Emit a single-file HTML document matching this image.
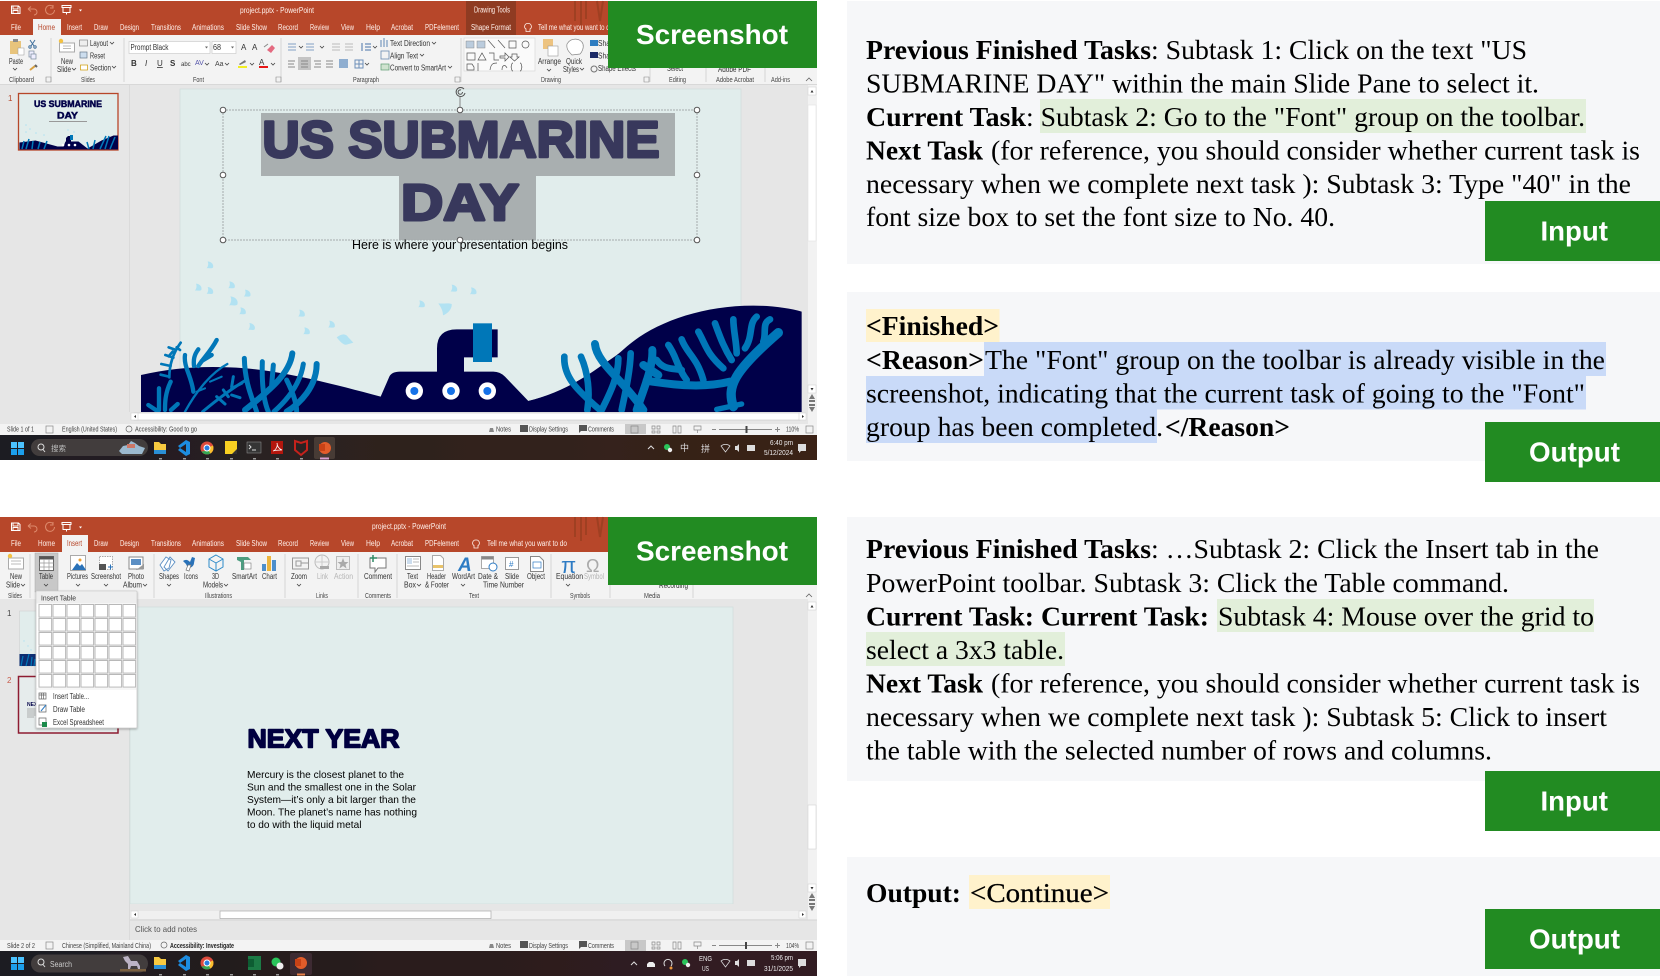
<!DOCTYPE html>
<html lang="en"><head><meta charset="utf-8"><title>Screenshot task examples</title>
<style>
html,body{margin:0;padding:0;background:#fff}
svg{display:block}
text{font-family:"Liberation Sans","Noto Sans CJK SC",sans-serif}
.s{font-family:"Liberation Serif",serif;font-size:27px;fill:#000}
.b{font-family:"Liberation Serif",serif;font-size:27px;font-weight:700;fill:#000}
.w{font-weight:700;fill:#fff}
.t{font-size:8px;fill:#fff0ea}
.r{font-size:8px;fill:#333}
.g{font-size:7px;fill:#444}
.st{font-size:7px;fill:#444}
.tk{font-size:7.5px;fill:#eee}
</style></head><body>
<svg xmlns="http://www.w3.org/2000/svg" width="1660" height="980" viewBox="0 0 1660 980">
<defs>
<filter id="bl" x="-2%" y="-2%" width="104%" height="104%"><feGaussianBlur stdDeviation="0.3"/></filter>
<filter id="bt" x="-2%" y="-2%" width="104%" height="104%"><feGaussianBlur stdDeviation="0.15"/></filter>
<filter id="sh" x="-10%" y="-10%" width="120%" height="120%"><feDropShadow dx="0" dy="1" stdDeviation="1" flood-opacity=".3"/></filter>
<path id="f" d="M-7-11C6-10 12 0 9 8 4 12-3 8-10 10-5 3-4-4-7-11z" fill="#b2e2f2"/>
<path id="c" d="M0 0l2 2 2-2" fill="none" stroke="#444" stroke-width=".8"/>
<pattern id="cell" x="38.5" y="604" width="14" height="14" patternUnits="userSpaceOnUse"><rect x=".5" y=".5" width="12.6" height="12.6" fill="#fff" stroke="#b8b8b8"/></pattern>
<g id="qat" fill="none" stroke="#fff" stroke-width="1">
<path d="M11.500 6h7l1.500 1.500v6h-8.500zM13 6v3h5V6M13 13.500v-3h5v3"/>
<path d="M28 9h6a3 3 0 0 1 0 6M28 9l3-2.500M28 9l3 2.500" stroke="#dd8a6c"/>
<path d="M53 6.500a4.500 4.500 0 1 0 1.500 3.500M53 5v3h-3" stroke="#dd8a6c"/>
<path d="M62 5.500h9v2h-9zM63 7.500v5h7v-5M66.500 12.500v2"/>
<path d="M79 9.500l1.500 2 1.500-2z" fill="#fff" stroke="none"/>
</g>
<g id="win"><rect x="0" y="0" width="6" height="6" fill="#4cc2ff"/><rect x="7" y="0" width="6" height="6" fill="#4cc2ff"/><rect x="0" y="7" width="6" height="6" fill="#1f9fec"/><rect x="7" y="7" width="6" height="6" fill="#1f9fec"/></g>
<g id="folder"><path d="M-6-6h5l2 2h5v10h-12z" fill="#f7c93f"/><rect x="-6" y="2" width="12" height="4" fill="#2a8fd6"/></g>
<g id="vs"><path d="M2-8L6-6v12L2 8-6 2l2-2 6 4V-4l-6 4-2-2z" fill="#1f8ce0"/></g>
<g id="chr"><circle r="6.500" fill="#dd4b3e"/><path d="M-5.500 3.500A6.500 6.500 0 0 0 4 5L1 0-1 3z" fill="#34a853"/><path d="M6 -2.500A6.500 6.500 0 0 1 3.500 5.500L0 0z" fill="#fbc02d"/><circle r="3" fill="#2a7de1" stroke="#fff"/></g>
</defs>

<!-- ======= right panels ======= -->
<g filter="url(#bt)">
<rect x="847" y="1" width="813" height="263" fill="#f6f7f9"/>
<rect x="847" y="292" width="813" height="169" fill="#f6f7f9"/>
<rect x="847" y="517" width="813" height="264" fill="#f6f7f9"/>
<rect x="847" y="857" width="813" height="119" fill="#f6f7f9"/>

<rect x="1040" y="99" width="546" height="34" fill="#e2efda"/>
<text class="b" x="866" y="59" textLength="285" lengthAdjust="spacingAndGlyphs">Previous Finished Tasks</text>
<text class="s" x="1151" y="59" textLength="376" lengthAdjust="spacingAndGlyphs">: Subtask 1: Click on the text "US</text>
<text class="s" x="866" y="92.500" textLength="673" lengthAdjust="spacingAndGlyphs">SUBMARINE DAY" within the main Slide Pane to select it.</text>
<text class="b" x="866" y="126" textLength="160" lengthAdjust="spacingAndGlyphs">Current Task</text>
<text class="s" x="1026" y="126" textLength="559" lengthAdjust="spacingAndGlyphs">: Subtask 2: Go to the "Font" group on the toolbar.</text>
<text class="b" x="866" y="159.500" textLength="117" lengthAdjust="spacingAndGlyphs">Next Task</text>
<text class="s" x="991" y="159.500" textLength="649" lengthAdjust="spacingAndGlyphs">(for reference, you should consider whether current task is</text>
<text class="s" x="866" y="193" textLength="765" lengthAdjust="spacingAndGlyphs">necessary when we complete next task ): Subtask 3: Type "40" in the</text>
<text class="s" x="866" y="226" textLength="469" lengthAdjust="spacingAndGlyphs">font size box to set the font size to No. 40.</text>

<rect x="866" y="309" width="133.500" height="33" fill="#fff2cc"/>
<rect x="984" y="342" width="622" height="34" fill="#c9daf8"/>
<rect x="866" y="376" width="720" height="33.500" fill="#c9daf8"/>
<rect x="866" y="409.500" width="291" height="33.500" fill="#c9daf8"/>
<text class="b" x="866" y="335" textLength="133" lengthAdjust="spacingAndGlyphs">&lt;Finished&gt;</text>
<text class="b" x="866" y="369" textLength="118" lengthAdjust="spacingAndGlyphs">&lt;Reason&gt;</text>
<text class="s" x="985" y="369" textLength="620" lengthAdjust="spacingAndGlyphs">The "Font" group on the toolbar is already visible in the</text>
<text class="s" x="866" y="402.500" textLength="719" lengthAdjust="spacingAndGlyphs">screenshot, indicating that the current task of going to the "Font"</text>
<text class="s" x="866" y="436" textLength="297" lengthAdjust="spacingAndGlyphs">group has been completed.</text>
<text class="b" x="1165" y="436" textLength="125" lengthAdjust="spacingAndGlyphs">&lt;/Reason&gt;</text>

<rect x="1217" y="599" width="377" height="33" fill="#e2efda"/>
<rect x="866" y="632" width="199" height="34" fill="#e2efda"/>
<text class="b" x="866" y="558" textLength="285" lengthAdjust="spacingAndGlyphs">Previous Finished Tasks</text>
<text class="s" x="1151" y="558" textLength="448" lengthAdjust="spacingAndGlyphs">: …Subtask 2: Click the Insert tab in the</text>
<text class="s" x="866" y="592" textLength="643" lengthAdjust="spacingAndGlyphs">PowerPoint toolbar. Subtask 3: Click the Table command.</text>
<text class="b" x="866" y="625.500" textLength="343" lengthAdjust="spacingAndGlyphs">Current Task: Current Task:</text>
<text class="s" x="1218" y="625.500" textLength="376" lengthAdjust="spacingAndGlyphs">Subtask 4: Mouse over the grid to</text>
<text class="s" x="866" y="659" textLength="198" lengthAdjust="spacingAndGlyphs">select a 3x3 table.</text>
<text class="b" x="866" y="692.500" textLength="117" lengthAdjust="spacingAndGlyphs">Next Task</text>
<text class="s" x="991" y="692.500" textLength="649" lengthAdjust="spacingAndGlyphs">(for reference, you should consider whether current task is</text>
<text class="s" x="866" y="726" textLength="741" lengthAdjust="spacingAndGlyphs">necessary when we complete next task ): Subtask 5: Click to insert</text>
<text class="s" x="866" y="759.500" textLength="626" lengthAdjust="spacingAndGlyphs">the table with the selected number of rows and columns.</text>

<rect x="969" y="875" width="141" height="34" fill="#fff2cc"/>
<text class="b" x="866" y="902" textLength="95" lengthAdjust="spacingAndGlyphs">Output:</text>
<text class="s" x="970" y="902" textLength="139" stroke="#000" stroke-width=".25" lengthAdjust="spacingAndGlyphs">&lt;Continue&gt;</text>

<rect x="1485" y="201" width="175" height="60" fill="#228b22"/>
<text class="w" x="1540.500" y="240.500" font-size="28" textLength="67.500" lengthAdjust="spacingAndGlyphs">Input</text>
<rect x="1485" y="422" width="175" height="60" fill="#228b22"/>
<text class="w" x="1529" y="461.500" font-size="28" textLength="91" lengthAdjust="spacingAndGlyphs">Output</text>
<rect x="1485" y="771" width="175" height="60" fill="#228b22"/>
<text class="w" x="1540.500" y="810.500" font-size="28" textLength="67.500" lengthAdjust="spacingAndGlyphs">Input</text>
<rect x="1485" y="909" width="175" height="60" fill="#228b22"/>
<text class="w" x="1529" y="948.500" font-size="28" textLength="91" lengthAdjust="spacingAndGlyphs">Output</text>
</g>

<!-- ======= screenshot 1 ======= -->
<g filter="url(#bl)">
<rect x="0" y="84" width="817" height="340" fill="#e6e6e6"/>
<rect x="0" y="1" width="817" height="34" fill="#b7472a"/>
<rect x="466" y="1" width="50" height="34" fill="#8f3a20"/>
<rect x="33" y="19" width="28" height="17" fill="#f3f3f3"/>
<rect x="0" y="35" width="817" height="49" fill="#f3f3f3"/>
<use href="#qat"/>
<path d="M575 1v20M581 1v24M586 1v18M597 1l3 20 3-20" stroke="#8f3a20" stroke-width="2" opacity=".6" fill="none"/>
<text class="t" x="240" y="13" textLength="74" lengthAdjust="spacingAndGlyphs">project.pptx  -  PowerPoint</text>
<text class="t" x="474" y="12.500" textLength="36" font-size="7" lengthAdjust="spacingAndGlyphs">Drawing Tools</text>
<text class="t" x="11" y="30" textLength="10" lengthAdjust="spacingAndGlyphs">File</text>
<text x="38" y="30" font-size="8" fill="#b7472a" textLength="17" lengthAdjust="spacingAndGlyphs">Home</text>
<text class="t" x="67" y="30" textLength="15" lengthAdjust="spacingAndGlyphs">Insert</text>
<text class="t" x="94" y="30" textLength="14" lengthAdjust="spacingAndGlyphs">Draw</text>
<text class="t" x="120" y="30" textLength="19" lengthAdjust="spacingAndGlyphs">Design</text>
<text class="t" x="151" y="30" textLength="30" lengthAdjust="spacingAndGlyphs">Transitions</text>
<text class="t" x="192" y="30" textLength="32" lengthAdjust="spacingAndGlyphs">Animations</text>
<text class="t" x="236" y="30" textLength="31" lengthAdjust="spacingAndGlyphs">Slide Show</text>
<text class="t" x="278" y="30" textLength="20" lengthAdjust="spacingAndGlyphs">Record</text>
<text class="t" x="310" y="30" textLength="19" lengthAdjust="spacingAndGlyphs">Review</text>
<text class="t" x="341" y="30" textLength="13" lengthAdjust="spacingAndGlyphs">View</text>
<text class="t" x="366" y="30" textLength="14" lengthAdjust="spacingAndGlyphs">Help</text>
<text class="t" x="391" y="30" textLength="22" lengthAdjust="spacingAndGlyphs">Acrobat</text>
<text class="t" x="425" y="30" textLength="34" lengthAdjust="spacingAndGlyphs">PDFelement</text>
<text class="t" x="471" y="30" textLength="40" lengthAdjust="spacingAndGlyphs">Shape Format</text>
<path d="M528 23.500a3 3 0 0 1 2 5.500v2.500h-4v-2.500a3 3 0 0 1 2-5.500z" fill="none" stroke="#fff0ea" stroke-width=".8"/>
<text class="t" x="538" y="30" textLength="75" lengthAdjust="spacingAndGlyphs">Tell me what you want to do</text>

<!-- ribbon 1 separators -->
<path d="M51 38v44M124 38v44M281 38v44M461 38v44M650 38v44M706 38v44M765 38v44" stroke="#cfcfcf" stroke-width=".8"/>
<!-- clipboard -->
<rect x="10" y="41" width="11" height="13" fill="#e8c47c"/><rect x="13" y="39" width="5" height="3" fill="#8c8c8c"/><rect x="18" y="48" width="6" height="7" fill="#fff" stroke="#999" stroke-width=".5"/>
<path d="M30 40l4 6M35 40l-4 6" stroke="#3f6f9c" fill="none"/><circle cx="30" cy="47" r="1.200" fill="none" stroke="#3f6f9c"/><circle cx="35" cy="47" r="1.200" fill="none" stroke="#3f6f9c"/>
<rect x="29" y="51" width="5" height="6" fill="#eef" stroke="#789" stroke-width=".7"/><rect x="31" y="54" width="5" height="5" fill="#eef" stroke="#789" stroke-width=".7"/>
<path d="M30 70l5-4" stroke="#d8a040" stroke-width="2"/><path d="M35 65l2 2" stroke="#666" stroke-width="2"/>
<text class="r" x="9" y="64" textLength="14" lengthAdjust="spacingAndGlyphs">Paste</text><use href="#c" x="13" y="68"/>
<text class="g" x="9" y="82" textLength="25" lengthAdjust="spacingAndGlyphs">Clipboard</text>
<!-- slides -->
<rect x="59.500" y="43" width="15" height="9" fill="#fff" stroke="#aaa"/><path d="M63 46h8M63 48.500h8" stroke="#bbb"/><circle cx="61" cy="41" r="2.200" fill="#f4c242"/>
<text class="r" x="61" y="64" textLength="12" lengthAdjust="spacingAndGlyphs">New</text><text class="r" x="57" y="72" textLength="14" lengthAdjust="spacingAndGlyphs">Slide</text><use href="#c" x="72" y="68"/>
<rect x="79.500" y="40" width="8" height="6" fill="#eee" stroke="#888" stroke-width=".7"/><text class="r" x="90" y="46" textLength="18" lengthAdjust="spacingAndGlyphs">Layout</text><use href="#c" x="110" y="42"/>
<rect x="80" y="52" width="7" height="6" fill="#cde" stroke="#678" stroke-width=".7"/><text class="r" x="90" y="58.500" textLength="15" lengthAdjust="spacingAndGlyphs">Reset</text>
<rect x="80.500" y="65" width="7" height="5" fill="#fff" stroke="#c90" stroke-width=".7"/><text class="r" x="90" y="70.500" textLength="21" lengthAdjust="spacingAndGlyphs">Section</text><use href="#c" x="112" y="66"/>
<text class="g" x="81" y="82" textLength="14" lengthAdjust="spacingAndGlyphs">Slides</text>
<!-- font -->
<rect x="129" y="41.500" width="81" height="12" fill="#fff" stroke="#ccc" stroke-width=".7"/><text class="r" x="130.500" y="50" textLength="38" lengthAdjust="spacingAndGlyphs">Prompt Black</text>
<path d="M205 46.500l1.500 2 1.500-2z" fill="#666"/>
<rect x="212" y="41.500" width="24" height="12" fill="#fff" stroke="#ccc" stroke-width=".7"/><text class="r" x="213" y="50" textLength="8" lengthAdjust="spacingAndGlyphs">68</text>
<path d="M231 46.500l1.500 2 1.500-2z" fill="#666"/>
<text class="r" x="241" y="50" font-size="8">A</text><text class="r" x="252" y="50" font-size="7">A</text>
<path d="M267 50l5-5 3 3-4 5z" fill="#e46a80"/><path d="M264 47l4-3" stroke="#888"/>
<text x="131" y="66" font-size="8" font-weight="700" fill="#333">B</text>
<text x="145" y="66" font-size="8" font-style="italic" font-family="Liberation Serif" fill="#333">I</text>
<text x="157" y="66" font-size="8" fill="#333" text-decoration="underline">U</text>
<text x="170" y="66" font-size="8" font-weight="700" fill="#333">S</text>
<text x="181" y="66" font-size="6" fill="#333">abc</text>
<text x="195" y="65" font-size="7" fill="#55a">AV</text><use href="#c" x="205" y="63"/>
<text x="215" y="66" font-size="7" fill="#444">Aa</text><use href="#c" x="225" y="63"/>
<path d="M239 64l6-4 1 2-6 3z" fill="#777"/><rect x="238" y="66" width="9" height="2" fill="#f2ee22"/><use href="#c" x="250" y="63"/>
<text x="259" y="65" font-size="8" fill="#333">A</text><rect x="259" y="66" width="9" height="2" fill="#e61414"/><use href="#c" x="271" y="63"/>
<text class="g" x="193" y="82" textLength="11" lengthAdjust="spacingAndGlyphs">Font</text>
<!-- paragraph -->
<path d="M288 44h8M288 47h8M288 50h8M306 44h8M306 47h8M306 50h8" stroke="#5f87b5" stroke-width=".8"/>
<use href="#c" x="299" y="46"/><use href="#c" x="320" y="46"/>
<path d="M332 44h8M332 47h8M332 50h8M345 44h8M345 47h8M345 50h8" stroke="#bbb"/>
<path d="M362 43v8M365 44h6M365 47h6M365 50h6" stroke="#4a73a8"/><use href="#c" x="373" y="46"/>
<rect x="298" y="57" width="13" height="13" fill="#c4c4c4"/>
<path d="M288 61h7M288 64h6M288 67h7M301 61h7M301 64h7M301 67h7M314 61h7M315 64h6M314 67h7M326 61h7M326 64h7M326 67h7" stroke="#888"/>
<rect x="339" y="59" width="9" height="9" fill="#8faed0"/><path d="M355 60h8v8h-8zM355 64h8M359 60v8" fill="none" stroke="#6d8fb8"/><use href="#c" x="365" y="63"/>
<path d="M381 40v7M384 38v9M387 40v7" stroke="#5f87b5"/><text class="r" x="390" y="46" textLength="40" lengthAdjust="spacingAndGlyphs">Text Direction</text><use href="#c" x="432" y="42"/>
<rect x="381" y="51" width="8" height="8" fill="none" stroke="#6a8ab0" stroke-width=".8"/><text class="r" x="390" y="58.500" textLength="28" lengthAdjust="spacingAndGlyphs">Align Text</text><use href="#c" x="420" y="54"/>
<rect x="381" y="64" width="8" height="6" fill="#cfe3cf" stroke="#5a9a70" stroke-width=".7"/><text class="r" x="390" y="70.500" textLength="56" lengthAdjust="spacingAndGlyphs">Convert to SmartArt</text><use href="#c" x="448" y="66"/>
<text class="g" x="353" y="82" textLength="26" lengthAdjust="spacingAndGlyphs">Paragraph</text>
<!-- drawing -->
<rect x="464" y="38" width="71" height="33" fill="#fafafa" stroke="#d8d8d8" stroke-width=".7"/>
<rect x="466" y="41" width="8" height="7" fill="#bcd" stroke="#888" stroke-width=".5"/><rect x="477" y="41" width="8" height="7" fill="#bcd" stroke="#888" stroke-width=".5"/>
<path d="M488 40l7 8M498 40l7 8M509 41h7v7h-7zM522 44.500a3.500 3.500 0 1 0 7 0a3.500 3.500 0 1 0-7 0M467 53h8v7h-8zM478 60l4-7 4 7zM489 53h5v7h5M500 56h5v-3l4 4-4 4v-3h-5zM512 54h5v3h2l-4.500 4-4.500-4h2zM467 64h5l2 3v3h-7zM478 63v8M490 70c1-7 4-7 7-7M502 70c0-5 3-6 5-2M513 63c-2 0-1 3-2 4 1 1 0 4 2 4M520 63c2 0 1 3 2 4-1 1 0 4-2 4" fill="none" stroke="#555" stroke-width=".7"/>
<rect x="543" y="39" width="10" height="10" fill="#edc380"/><rect x="548" y="46" width="10" height="10" fill="#fff" stroke="#999" stroke-width=".6"/>
<text class="r" x="538" y="64" textLength="23" lengthAdjust="spacingAndGlyphs">Arrange</text><use href="#c" x="547" y="69"/>
<path d="M567 44c4-7 14-6 16 0 1 4-1 8-3 10l-8 1c-3-3-6-6-5-11z" fill="#fff" stroke="#888" stroke-width=".7"/>
<text class="r" x="566" y="64" textLength="16" lengthAdjust="spacingAndGlyphs">Quick</text><text class="r" x="563" y="72" textLength="16" lengthAdjust="spacingAndGlyphs">Styles</text><use href="#c" x="580" y="68"/>
<rect x="590" y="40" width="8" height="6" fill="#2d7cc0"/><rect x="590" y="52" width="8" height="6" fill="#1c2c66"/>
<path d="M594 66a3 3 0 1 0 .1 0" fill="none" stroke="#777"/>
<text class="r" x="598" y="46" textLength="12" lengthAdjust="spacingAndGlyphs">Sha</text><text class="r" x="598" y="58.500" textLength="12" lengthAdjust="spacingAndGlyphs">Sha</text>
<text class="r" x="598" y="71" textLength="38" lengthAdjust="spacingAndGlyphs">Shape Effects</text>
<text class="g" x="541" y="82" textLength="20" lengthAdjust="spacingAndGlyphs">Drawing</text>
<text class="r" x="667" y="71" textLength="16" lengthAdjust="spacingAndGlyphs">Select</text>
<text class="r" x="718" y="72" textLength="33" lengthAdjust="spacingAndGlyphs">Adobe PDF</text>
<text class="g" x="669" y="82" textLength="17" lengthAdjust="spacingAndGlyphs">Editing</text>
<text class="g" x="716" y="82" textLength="38" lengthAdjust="spacingAndGlyphs">Adobe Acrobat</text>
<text class="g" x="771" y="82" textLength="19" lengthAdjust="spacingAndGlyphs">Add-ins</text>
<path d="M806 81l3-3 3 3" fill="none" stroke="#666" stroke-width=".8"/>
<path d="M46 77h5v5h-5zM276 77h5v5h-5zM455 77h5v5h-5zM644 77h5v5h-5z" fill="none" stroke="#888" stroke-width=".6"/>

<!-- pane 1 -->
<rect x="0" y="84" width="817" height="1" fill="#d8d8d8"/>
<rect x="129" y="85" width="1" height="338" fill="#dadada"/>
<text x="8" y="101" font-size="8" fill="#b7472a">1</text>
<rect x="18.500" y="93.500" width="99.500" height="56.500" fill="#e1edec" stroke="#b7472a" stroke-width="1.300"/>
<text x="34" y="107" font-size="9" font-weight="700" fill="#05054a" stroke="#05054a" stroke-width=".5" textLength="68" lengthAdjust="spacingAndGlyphs">US SUBMARINE</text>
<text x="57" y="118.500" font-size="9" font-weight="700" fill="#05054a" stroke="#05054a" stroke-width=".5" textLength="21" lengthAdjust="spacingAndGlyphs">DAY</text>
<rect x="49" y="121" width="38" height="1" fill="#999"/>
<path d="M19.500 149.500v-7l16-2 22 6h6l2-5h13l9 7 14-8 12-5h4.500v14z" fill="#03034a"/>
<path d="M66 142v-4l2-2h5v3h-2v3z" fill="#03034a"/><rect x="70" y="135" width="3" height="5" fill="#0277b8"/>
<circle cx="63" cy="145" r="1.300" fill="#fff"/><circle cx="69" cy="145" r="1.300" fill="#fff"/><circle cx="75" cy="145" r="1.300" fill="#fff"/>
<path d="M22 149l2-8M26 149l3-10M32 149l1-8M38 149l2-7M44 149l3-8M89 149l-2-7M93 149l2-9M100 149l6-13M105 149l4-13M110 149l5-12" stroke="#0277b8" stroke-width="1.500"/>
<circle cx="26" cy="125" r=".8" fill="#b2e2f2"/><circle cx="30" cy="129" r=".8" fill="#b2e2f2"/><circle cx="36" cy="133" r=".8" fill="#b2e2f2"/><circle cx="44" cy="135" r=".8" fill="#b2e2f2"/><circle cx="26" cy="132" r=".8" fill="#b2e2f2"/><circle cx="68" cy="130" r=".8" fill="#b2e2f2"/><circle cx="74" cy="132" r=".8" fill="#b2e2f2"/>

<rect x="180" y="89" width="561" height="323" fill="#e1edec" stroke="#d2dedd" stroke-width=".8"/>
<!-- selection -->
<rect x="261" y="113" width="414" height="63" fill="#a9afb0"/>
<rect x="399" y="176" width="137" height="64" fill="#a9afb0"/>
<rect x="223" y="110" width="474" height="130" fill="none" stroke="#a5abab" stroke-dasharray="2 1"/>
<text x="262.500" y="157" font-size="51" font-weight="700" fill="#38385c" stroke="#38385c" stroke-width="3" stroke-linejoin="round" textLength="397" lengthAdjust="spacingAndGlyphs">US SUBMARINE</text>
<text x="401" y="220" font-size="51" font-weight="700" fill="#38385c" stroke="#38385c" stroke-width="3" stroke-linejoin="round" textLength="118" lengthAdjust="spacingAndGlyphs">DAY</text>
<text x="352" y="249" font-size="13" fill="#000" textLength="216" lengthAdjust="spacingAndGlyphs">Here is where your presentation begins</text>
<path d="M460 97v13" stroke="#888"/>
<g fill="#fff" stroke="#555"><circle cx="223" cy="110" r="2.800"/><circle cx="460" cy="110" r="2.800"/><circle cx="697" cy="110" r="2.800"/><circle cx="223" cy="175" r="2.800"/><circle cx="697" cy="175" r="2.800"/><circle cx="223" cy="240" r="2.800"/><circle cx="460" cy="240" r="2.800"/><circle cx="697" cy="240" r="2.800"/></g>
<path d="M464 89a4.500 4.500 0 1 0 1 4M461 90a2.200 2.200 0 1 0 1.500 2" fill="none" stroke="#555" stroke-width="1"/>

<!-- art -->
<g transform="translate(130 260) scale(.33333)">
<use href="#f" x="240" y="15"/><use href="#f" x="205" y="82"/><use href="#f" x="240" y="92"/><use href="#f" x="305" y="75"/><use href="#f" x="352" y="100"/><use href="#f" x="308" y="122" transform="translate(-90 -35) scale(1.3)"/><use href="#f" x="338" y="153"/><use href="#f" x="365" y="200"/><use href="#f" x="515" y="160"/><use href="#f" x="530" y="213"/><use href="#f" x="605" y="193"/><use href="#f" x="875" y="132"/><use href="#f" x="972" y="85"/><use href="#f" x="1030" y="93"/>
<path d="M620 232c15-12 28-12 35 0l15 16-20 6c-10 2-20-10-30-22zM925 130c14 2 30-2 40 2 2 10-8 28-26 34 0-14-6-24-14-36z" fill="#b2e2f2"/>
<path d="M33 345C120 325 200 318 300 322 420 326 560 358 752 410L778 350Q785 335 810 335H921V265Q921 208 980 208H1103V292H1002V335H1090Q1110 335 1125 350L1195 423C1270 405 1340 370 1410 320L1500 258V456H33z" fill="#03034a"/>
<rect x="1029" y="190" width="57" height="116" fill="#0277b8"/>
<circle cx="853" cy="393" r="26" fill="#fff"/><circle cx="963" cy="393" r="26" fill="#fff"/><circle cx="1072" cy="393" r="26" fill="#fff"/>
<circle cx="853" cy="393" r="12" fill="#1472e8"/><circle cx="963" cy="393" r="12" fill="#1472e8"/><circle cx="1072" cy="393" r="12" fill="#1472e8"/>
<g fill="none" stroke="#0277b8" stroke-linecap="round">
<path d="M152 248C125 285 118 320 118 352M138 270l-22-8M130 293l-24-8M122 318l-28-6M118 350l-26-6M128 275l-12 14M140 262l10 8" stroke-width="8"/>
<path d="M165 285C160 320 185 350 190 395M205 268C192 285 190 300 192 318M260 240C245 270 220 295 205 318M245 285l-30 18" stroke-width="13"/>
<path d="M292 312C240 340 195 400 165 455" stroke-width="7"/>
<path d="M275 350l-35 15M225 385l-25 10" stroke-width="6"/>
<path d="M87 385V450M122 365C105 400 105 430 105 450M55 435l30 20M143 432l-20 18" stroke-width="13"/>
<path d="M352 358C305 385 260 420 218 455M310 350l-5 30M335 370l-30 15M280 390l15 20M305 405l25 8M260 410l25 22" stroke-width="9"/>
<path d="M343 295C345 370 365 410 380 455M397 305C395 370 400 420 415 455M430 315L425 375M520 312C510 380 460 430 432 455M470 360C490 400 500 430 500 455" stroke-width="15"/>
<path d="M487 280C480 340 420 390 345 450M560 312C560 380 510 430 470 455" stroke-width="18"/>
</g>
</g>
<g transform="translate(500 260) scale(.33333)">
<path d="M85 423C180 400 280 350 380 260 460 190 600 137 760 137 820 137 870 145 905 155V456H85z" fill="#03034a"/>
<g fill="none" stroke="#0277b8" stroke-linecap="round">
<path d="M193 290C190 350 230 390 300 450M243 290C265 340 270 400 262 450M355 295C355 350 330 400 305 450M392 280C390 340 375 400 365 450" stroke-width="20"/>
<path d="M285 252C290 310 370 360 430 450M457 270C460 320 430 390 410 450M430 315L475 345" stroke-width="24"/>
<path d="M440 362C520 375 610 385 690 365" stroke-width="24"/>
<path d="M700 440C680 380 700 335 835 218" stroke-width="28"/>
<path d="M505 255C530 290 530 320 560 360M545 238C560 280 590 290 610 360M595 215C620 260 620 280 670 325M645 190C660 230 670 260 695 300M700 178C700 210 710 250 710 280M770 170C745 190 760 230 735 265M810 178C785 190 800 220 790 245M470 300C490 330 520 325 545 330" stroke-width="20"/>
<path d="M650 448L725 432" stroke-width="16"/>
</g>
</g>

<!-- scrollbars 1 -->
<rect x="129" y="412" width="680" height="11" fill="#e6e6e6"/>
<rect x="134" y="413" width="666" height="7" fill="#fff" stroke="#bbb" stroke-width=".5"/>
<rect x="131" y="413" width="7" height="7" fill="#fff" stroke="#ccc" stroke-width=".5"/><path d="M136 415v3l-2-1.500z" fill="#333"/>
<rect x="799" y="413" width="7" height="7" fill="#fff" stroke="#ccc" stroke-width=".5"/><path d="M802 415v3l2-1.500z" fill="#333"/>
<rect x="808" y="85" width="9" height="340" fill="#f2f2f2"/>
<rect x="808" y="105" width="8" height="136" fill="#fff" stroke="#ddd" stroke-width=".5"/>
<rect x="808" y="87" width="8" height="8" fill="#fff" stroke="#ccc" stroke-width=".5"/><path d="M810.500 92.500l1.500-2.500 1.500 2.500z" fill="#333"/>
<rect x="808" y="385" width="8" height="8" fill="#fff" stroke="#ccc" stroke-width=".5"/><path d="M810.500 388l1.500 2.500 1.500-2.500z" fill="#333"/>
<path d="M812 394l-3 5h6zM809 400h6v2h-6zM809 404h6v2h-6zM812 412l-3-5h6z" fill="#777"/>

<!-- status 1 -->
<rect x="0" y="424" width="817" height="11" fill="#f3f3f3"/>
<text class="st" x="7" y="431.500" textLength="27" lengthAdjust="spacingAndGlyphs">Slide 1 of 1</text>
<rect x="46" y="426" width="7" height="7" fill="none" stroke="#888" stroke-width=".7"/>
<text class="st" x="62" y="431.500" textLength="55" lengthAdjust="spacingAndGlyphs">English (United States)</text>
<circle cx="129" cy="429" r="3" fill="none" stroke="#666" stroke-width=".7"/>
<text class="st" x="135" y="431.500" textLength="62" lengthAdjust="spacingAndGlyphs">Accessibility: Good to go</text>
<path d="M489 432h5l-1-4h-3z" fill="#888"/>
<text class="st" x="496" y="431.500" textLength="15" lengthAdjust="spacingAndGlyphs">Notes</text>
<rect x="520" y="425" width="8" height="7" fill="#555"/>
<text class="st" x="529" y="431.500" textLength="39" lengthAdjust="spacingAndGlyphs">Display Settings</text>
<path d="M579 425h8v6h-6l-2 2z" fill="#555"/>
<text class="st" x="588" y="431.500" textLength="26" lengthAdjust="spacingAndGlyphs">Comments</text>
<rect x="625" y="424" width="21" height="10" fill="#c8c8c8"/>
<path d="M631 426h7v7h-7zM652 426h3v3h-3zM657 426h3v3h-3zM652 431h3v2h-3zM657 431h3v2h-3zM673 426h3v7h-3zM678 426h3v7h-3zM694 426h7v4h-7zM697.500 430v3" fill="none" stroke="#888" stroke-width=".7"/>
<path d="M712 429.500h4M719 429.500h53M775 429.500h5M777.500 427v5" stroke="#888"/>
<rect x="745.500" y="426" width="2" height="7" fill="#444"/>
<text class="st" x="786" y="431.500" textLength="13" lengthAdjust="spacingAndGlyphs">110%</text>
<rect x="806" y="426" width="7" height="7" fill="none" stroke="#888" stroke-width=".7"/>

<!-- taskbar 1 -->
<linearGradient id="tb1"><stop offset="0" stop-color="#1d1b20"/><stop offset=".4" stop-color="#2c2220"/><stop offset="1" stop-color="#3a2016"/></linearGradient>
<rect x="0" y="435" width="817" height="25" fill="url(#tb1)"/>
<use href="#win" x="11" y="442"/>
<rect x="31" y="439" width="117" height="17" rx="8.500" fill="#423e3e"/>
<circle cx="41" cy="447" r="3" fill="none" stroke="#ddd"/><path d="M43 449.500l2 2.500" stroke="#ddd"/>
<text x="51" y="451" font-size="7.500" fill="#bbb" textLength="15" lengthAdjust="spacingAndGlyphs">搜索</text>
<path d="M119 451l4-5 5-1 3-4 4 2 4 3 6 2-3 6h-20z" fill="#9bb9cf"/><rect x="127" y="444" width="8" height="4" fill="#c76"/>
<use href="#folder" x="160" y="448"/><use href="#vs" x="184" y="448"/><use href="#chr" x="207" y="448"/>
<rect x="225" y="441" width="12" height="13" fill="#f8d020"/><path d="M232 454l5-5v5z" fill="#333"/>
<rect x="247" y="442" width="14" height="11" fill="#353535" stroke="#999" stroke-width=".5"/><path d="M249 445l2 2-2 2M252 450h4" fill="none" stroke="#ddd"/>
<rect x="271" y="441" width="12" height="13" fill="#b3160f"/><path d="M273 451c3-1 5-5 4-8 0 3 2 6 5 7-3 0-6 0-9 1z" fill="none" stroke="#fff" stroke-width=".8"/>
<path d="M295 441l6 2 6-2v9l-6 5-6-5z" fill="none" stroke="#c4201b" stroke-width="2"/>
<rect x="314" y="437" width="21" height="22" rx="2" fill="#463b36"/>
<circle cx="325" cy="448" r="6" fill="#e25b29"/><rect x="319" y="444" width="6" height="7" fill="#c94316"/>
<g fill="#999"><rect x="159" y="458" width="3" height="1.500"/><rect x="183" y="458" width="3" height="1.500"/><rect x="206" y="458" width="3" height="1.500"/><rect x="230" y="458" width="3" height="1.500"/><rect x="253" y="458" width="3" height="1.500"/><rect x="276" y="458" width="3" height="1.500"/><rect x="300" y="458" width="3" height="1.500"/></g>
<rect x="320" y="457.500" width="9" height="2" fill="#d9a0d0"/>
<path d="M648 449l3-3 3 3" fill="none" stroke="#ddd"/>
<circle cx="667" cy="447" r="3" fill="#29c45a"/><circle cx="670" cy="450" r="2.200" fill="#eee"/>
<text x="680" y="451" font-size="9" fill="#ddd">中</text><text x="701" y="452" font-size="9" fill="#ddd">拼</text>
<path d="M721 446a7 7 0 0 1 9 0l-4.500 6z" fill="none" stroke="#ddd" stroke-width=".8"/>
<path d="M735 446h2l2-2v8l-2-2h-2z" fill="#ddd"/><rect x="747" y="445" width="8" height="6" fill="#ddd"/>
<text class="tk" x="770" y="445" textLength="23" lengthAdjust="spacingAndGlyphs">6:40 pm</text>
<text class="tk" x="764" y="455" textLength="29" lengthAdjust="spacingAndGlyphs">5/12/2024</text>
<path d="M798 444h8v7h-5l-2 2v-2h-1z" fill="#ddd"/>
</g>

<!-- ======= screenshot 2 ======= -->
<g filter="url(#bl)">
<rect x="0" y="599" width="817" height="342" fill="#e6e6e6"/>
<rect x="0" y="517" width="817" height="35" fill="#b7472a"/>
<rect x="62" y="535" width="26" height="18" fill="#f3f3f3"/>
<rect x="0" y="552" width="817" height="47" fill="#f3f3f3"/>
<use href="#qat" y="517"/>
<path d="M575 517v20M581 517v24M586 517v18M597 517l3 20 3-20" stroke="#8f3a20" stroke-width="2" opacity=".6" fill="none"/>
<text class="t" x="372" y="529" textLength="74" lengthAdjust="spacingAndGlyphs">project.pptx  -  PowerPoint</text>
<text class="t" x="11" y="546" textLength="10" lengthAdjust="spacingAndGlyphs">File</text>
<text class="t" x="38" y="546" textLength="17" lengthAdjust="spacingAndGlyphs">Home</text>
<text x="67" y="546" font-size="8" fill="#b7472a" textLength="15" lengthAdjust="spacingAndGlyphs">Insert</text>
<text class="t" x="94" y="546" textLength="14" lengthAdjust="spacingAndGlyphs">Draw</text>
<text class="t" x="120" y="546" textLength="19" lengthAdjust="spacingAndGlyphs">Design</text>
<text class="t" x="151" y="546" textLength="30" lengthAdjust="spacingAndGlyphs">Transitions</text>
<text class="t" x="192" y="546" textLength="32" lengthAdjust="spacingAndGlyphs">Animations</text>
<text class="t" x="236" y="546" textLength="31" lengthAdjust="spacingAndGlyphs">Slide Show</text>
<text class="t" x="278" y="546" textLength="20" lengthAdjust="spacingAndGlyphs">Record</text>
<text class="t" x="310" y="546" textLength="19" lengthAdjust="spacingAndGlyphs">Review</text>
<text class="t" x="341" y="546" textLength="13" lengthAdjust="spacingAndGlyphs">View</text>
<text class="t" x="366" y="546" textLength="14" lengthAdjust="spacingAndGlyphs">Help</text>
<text class="t" x="391" y="546" textLength="22" lengthAdjust="spacingAndGlyphs">Acrobat</text>
<text class="t" x="425" y="546" textLength="34" lengthAdjust="spacingAndGlyphs">PDFelement</text>
<path d="M476 540a3 3 0 0 1 2 5.500v2.500h-4v-2.500a3 3 0 0 1 2-5.500z" fill="none" stroke="#fff0ea" stroke-width=".8"/>
<text class="t" x="487" y="546" textLength="80" lengthAdjust="spacingAndGlyphs">Tell me what you want to do</text>

<path d="M30 554v44M154 554v44M285 554v44M358 554v44M397 554v44M551 554v44M610 554v44M693 554v44" stroke="#cfcfcf" stroke-width=".8"/>
<rect x="35" y="553" width="23" height="39" fill="#c8c8c8" stroke="#aaa" stroke-width=".5"/>
<!-- ribbon 2 icons -->
<rect x="8.500" y="558" width="15" height="11" fill="#fff" stroke="#aaa"/><path d="M11 561h10M11 564h10" stroke="#bbb"/><circle cx="10" cy="556" r="2.200" fill="#f4c242"/>
<rect x="39.500" y="556.500" width="14" height="14" fill="#fff" stroke="#666"/><rect x="39.500" y="556.500" width="14" height="3" fill="#555"/><path d="M39.500 563h14M39.500 567h14M44 559v11M49 559v11" stroke="#999" stroke-width=".7"/>
<rect x="70.500" y="555.500" width="15" height="15" fill="#fff" stroke="#aaa"/><path d="M72 570l5-7 3 3 2-2 4 6z" fill="#2a72b8"/><circle cx="80" cy="560" r="1.500" fill="#f0a030"/>
<rect x="99.500" y="556.500" width="13" height="13" fill="#fff" stroke="#aaa" stroke-dasharray="1.500 1"/><rect x="99" y="564" width="7" height="6" fill="#555"/><path d="M108 567h5M110.500 564.500v5" stroke="#2a72b8"/>
<rect x="129" y="557" width="14" height="12" fill="#fff" stroke="#888"/><rect x="131" y="559" width="10" height="6" fill="#5c8fc4"/><path d="M136 570l8-6v5z" fill="#999"/>
<path d="M160 565l6-8 5 3-2 8-5 3zM170 557l5 5-7 9-4-4z" fill="#fff" stroke="#5b8fc4" stroke-width=".9"/>
<path d="M183 561c3-2 5-1 7 1l2-5 3 1-1 5c0 3-3 5-6 5l-2-4z" fill="#2a72b8"/><path d="M191 565l-2 6-3-1 2-5z" fill="#fff" stroke="#777" stroke-width=".7"/>
<path d="M216 555l7 4v8l-7 4-7-4v-8zM216 563l7-4M216 563l-7-4M216 563v8" fill="none" stroke="#2e8bc9"/>
<path d="M237 557h11l3 3h-7v10h-3v-8l-4-2z" fill="#4d9d80"/><rect x="244" y="563" width="7" height="6" fill="#fff" stroke="#777" stroke-width=".6"/>
<rect x="262" y="564" width="4" height="7" fill="#4d8fcc"/><rect x="267" y="556" width="4" height="15" fill="#edb53c"/><rect x="272" y="560" width="4" height="11" fill="#4d8fcc"/>
<path d="M292.500 558h16v11h-16zM296 561h5v5h-5zM301 563h7" fill="none" stroke="#999"/>
<circle cx="322" cy="562" r="7" fill="none" stroke="#bbb"/><path d="M315 562h14M322 555v14" stroke="#ccc"/><rect x="320" y="566" width="9" height="3" fill="#aaa"/>
<rect x="336.500" y="556.500" width="13" height="13" fill="#eee" stroke="#bbb"/><path d="M343 558l1.500 4h4l-3 2.500 1 4-3.500-2.500-3.500 2.500 1-4-3-2.500h4z" fill="#aaa"/>
<path d="M370 558h16v10h-8l-3 4v-4h-5z" fill="#fff" stroke="#777"/><path d="M373 555v7M370 558h7" stroke="#2f8a66" stroke-width="1.500"/>
<rect x="405.500" y="556.500" width="15" height="13" fill="#fff" stroke="#888"/><rect x="407" y="558" width="5" height="6" fill="#cde"/><path d="M413 559h6M413 562h6M407 566h12" stroke="#bbb"/>
<path d="M432.500 555.500h8l3 3v12h-11z" fill="#fff" stroke="#aaa"/><rect x="433" y="565" width="10" height="3" fill="#e9c36a"/>
<text x="458" y="571" font-size="19" font-style="italic" font-weight="700" fill="#2e7bc4" font-family="Liberation Serif">A</text>
<rect x="481.500" y="556.500" width="12" height="12" fill="#fff" stroke="#aaa"/><rect x="481.500" y="556.500" width="12" height="3" fill="#888"/><circle cx="493" cy="567" r="4" fill="#fff" stroke="#2e7bc4"/>
<rect x="505.500" y="557.500" width="13" height="12" fill="#fff" stroke="#999"/><text x="509" y="567" font-size="8" fill="#2e7bc4">#</text>
<path d="M530.500 556.500h9l4 4v11h-13z" fill="#fff" stroke="#888"/><rect x="533" y="562" width="8" height="6" fill="#fff" stroke="#2e7bc4" stroke-width=".7"/>
<text x="561" y="573" font-size="22" font-family="Liberation Serif" fill="#2e7bc4">π</text>
<text x="586" y="572" font-size="18" font-family="Liberation Serif" fill="#aaa">Ω</text>
<!-- ribbon 2 labels -->
<text class="r" x="10" y="579" textLength="12" lengthAdjust="spacingAndGlyphs">New</text><text class="r" x="6" y="587.500" textLength="14" lengthAdjust="spacingAndGlyphs">Slide</text><use href="#c" x="21" y="584"/>
<text class="r" x="39" y="579" textLength="14" lengthAdjust="spacingAndGlyphs">Table</text><use href="#c" x="44" y="584"/>
<text class="r" x="67" y="579" textLength="21" lengthAdjust="spacingAndGlyphs">Pictures</text><use href="#c" x="76" y="584"/>
<text class="r" x="91" y="579" textLength="30" lengthAdjust="spacingAndGlyphs">Screenshot</text><use href="#c" x="104" y="584"/>
<text class="r" x="128" y="579" textLength="16" lengthAdjust="spacingAndGlyphs">Photo</text><text class="r" x="123" y="587.500" textLength="19" lengthAdjust="spacingAndGlyphs">Album</text><use href="#c" x="143" y="584"/>
<text class="r" x="159" y="579" textLength="20" lengthAdjust="spacingAndGlyphs">Shapes</text><use href="#c" x="167" y="584"/>
<text class="r" x="184" y="579" textLength="14" lengthAdjust="spacingAndGlyphs">Icons</text>
<text class="r" x="212" y="579" textLength="7" lengthAdjust="spacingAndGlyphs">3D</text><text class="r" x="203" y="587.500" textLength="20" lengthAdjust="spacingAndGlyphs">Models</text><use href="#c" x="224" y="584"/>
<text class="r" x="232" y="579" textLength="25" lengthAdjust="spacingAndGlyphs">SmartArt</text>
<text class="r" x="262" y="579" textLength="15" lengthAdjust="spacingAndGlyphs">Chart</text>
<text class="r" x="291" y="579" textLength="16" lengthAdjust="spacingAndGlyphs">Zoom</text><use href="#c" x="297" y="584"/>
<text x="317" y="579" font-size="8" fill="#b5b5b5" textLength="11" lengthAdjust="spacingAndGlyphs">Link</text>
<text x="334" y="579" font-size="8" fill="#b5b5b5" textLength="19" lengthAdjust="spacingAndGlyphs">Action</text>
<text class="r" x="364" y="579" textLength="28" lengthAdjust="spacingAndGlyphs">Comment</text>
<text class="r" x="407" y="579" textLength="11" lengthAdjust="spacingAndGlyphs">Text</text><text class="r" x="404" y="587.500" textLength="12" lengthAdjust="spacingAndGlyphs">Box</text><use href="#c" x="417" y="584"/>
<text class="r" x="427" y="579" textLength="19" lengthAdjust="spacingAndGlyphs">Header</text><text class="r" x="425" y="587.500" textLength="24" lengthAdjust="spacingAndGlyphs">&amp; Footer</text>
<text class="r" x="452" y="579" textLength="23" lengthAdjust="spacingAndGlyphs">WordArt</text><use href="#c" x="461" y="584"/>
<text class="r" x="478" y="579" textLength="20" lengthAdjust="spacingAndGlyphs">Date &amp;</text><text class="r" x="483" y="587.500" textLength="15" lengthAdjust="spacingAndGlyphs">Time</text>
<text class="r" x="505" y="579" textLength="14" lengthAdjust="spacingAndGlyphs">Slide</text><text class="r" x="500" y="587.500" textLength="24" lengthAdjust="spacingAndGlyphs">Number</text>
<text class="r" x="527" y="579" textLength="18" lengthAdjust="spacingAndGlyphs">Object</text>
<text class="r" x="556" y="579" textLength="27" lengthAdjust="spacingAndGlyphs">Equation</text><use href="#c" x="566" y="584"/>
<text x="584" y="579" font-size="8" fill="#b5b5b5" textLength="20" lengthAdjust="spacingAndGlyphs">Symbol</text>
<text class="r" x="659" y="588" textLength="29" lengthAdjust="spacingAndGlyphs">Recording</text>
<text class="g" x="8" y="598" textLength="14" lengthAdjust="spacingAndGlyphs">Slides</text>
<text class="g" x="205" y="598" textLength="27" lengthAdjust="spacingAndGlyphs">Illustrations</text>
<text class="g" x="316" y="598" textLength="12" lengthAdjust="spacingAndGlyphs">Links</text>
<text class="g" x="365" y="598" textLength="26" lengthAdjust="spacingAndGlyphs">Comments</text>
<text class="g" x="469" y="598" textLength="10" lengthAdjust="spacingAndGlyphs">Text</text>
<text class="g" x="570" y="598" textLength="20" lengthAdjust="spacingAndGlyphs">Symbols</text>
<text class="g" x="644" y="598" textLength="16" lengthAdjust="spacingAndGlyphs">Media</text>
<path d="M806 597l3-3 3 3" fill="none" stroke="#666" stroke-width=".8"/>

<!-- pane 2 -->
<rect x="129" y="599" width="1" height="342" fill="#dadada"/>
<text x="7" y="616" font-size="8" fill="#444">1</text>
<rect x="19.500" y="611" width="40" height="55" fill="#e1edec" stroke="#ccc" stroke-width=".5"/>
<rect x="19.500" y="654" width="17" height="12" fill="#0f2f72"/>
<path d="M21 666l2-10M26 666l3-12M31 666l1-9M34 666l1-7" stroke="#0277b8" stroke-width="1.200"/>
<circle cx="24" cy="641" r=".7" fill="#b2e2f2"/><circle cx="28" cy="646" r=".7" fill="#b2e2f2"/><circle cx="31" cy="650" r=".7" fill="#b2e2f2"/>
<text x="7" y="683" font-size="8" fill="#c85a4a">2</text>
<rect x="18.500" y="676.500" width="99.500" height="56.500" fill="#e6ecec" stroke="#8e1c30" stroke-width="1.500"/>
<text x="27" y="706" font-size="5" font-weight="700" fill="#05054a">NEX</text>
<path d="M27 709h9M27 711h9M27 713h9M27 715h9M27 717h7" stroke="#999" stroke-width=".8"/>
<rect x="130" y="607" width="603" height="297" fill="#e1edec" stroke="#d2dedd" stroke-width=".8"/>
<text x="247.500" y="747.500" font-size="25.500" font-weight="700" fill="#05053f" stroke="#05053f" stroke-width="1.600" stroke-linejoin="round" textLength="152" lengthAdjust="spacingAndGlyphs">NEXT YEAR</text>
<text x="247" y="778" font-size="10.500" fill="#000" textLength="157" lengthAdjust="spacingAndGlyphs">Mercury is the closest planet to the</text>
<text x="247" y="790.500" font-size="10.500" fill="#000" textLength="169" lengthAdjust="spacingAndGlyphs">Sun and the smallest one in the Solar</text>
<text x="247" y="803" font-size="10.500" fill="#000" textLength="169" lengthAdjust="spacingAndGlyphs">System—it’s only a bit larger than the</text>
<text x="247" y="815.500" font-size="10.500" fill="#000" textLength="170" lengthAdjust="spacingAndGlyphs">Moon. The planet’s name has nothing</text>
<text x="247" y="828" font-size="10.500" fill="#000" textLength="114.500" lengthAdjust="spacingAndGlyphs">to do with the liquid metal</text>

<!-- dropdown -->
<rect x="36" y="591" width="101" height="137" rx="1" fill="#fff" stroke="#ccc" stroke-width=".8" filter="url(#sh)"/>
<rect x="36.500" y="591.500" width="100" height="12" fill="#eee"/>
<text x="41" y="600.500" font-size="7" fill="#333" textLength="35" lengthAdjust="spacingAndGlyphs">Insert Table</text>
<rect x="38.500" y="604" width="98" height="84" fill="url(#cell)"/>
<path d="M36.500 689h100" stroke="#ddd" stroke-width=".6"/>
<path d="M39 693h7v6h-7zM39 695h7M41.500 693v6M43.500 693v6" fill="none" stroke="#666" stroke-width=".7"/>
<text class="r" x="53" y="699" textLength="36" lengthAdjust="spacingAndGlyphs">Insert Table...</text>
<path d="M39 705h7v7h-7z" fill="none" stroke="#666" stroke-width=".7"/><path d="M41 711l5-6" stroke="#2e7bc4"/>
<text class="r" x="53" y="712" textLength="32" lengthAdjust="spacingAndGlyphs">Draw Table</text>
<path d="M39 718h7v7h-7z" fill="none" stroke="#666" stroke-width=".7"/><rect x="42" y="722" width="5" height="5" fill="#1e8a4c"/>
<text class="r" x="53" y="725" textLength="51" lengthAdjust="spacingAndGlyphs">Excel Spreadsheet</text>

<!-- scrollbars 2 -->
<rect x="130" y="904" width="679" height="15" fill="#e6e6e6"/>
<rect x="130" y="911" width="676" height="8" fill="#f0f0f0"/>
<rect x="220" y="911" width="271" height="7.500" fill="#fff" stroke="#aaa" stroke-width=".7"/>
<rect x="131" y="911" width="7" height="7" fill="#fff" stroke="#ccc" stroke-width=".5"/><path d="M136 913v3l-2-1.500z" fill="#333"/>
<rect x="799" y="911" width="7" height="7" fill="#fff" stroke="#ccc" stroke-width=".5"/><path d="M802 913v3l2-1.500z" fill="#333"/>
<rect x="808" y="599" width="9" height="321" fill="#f2f2f2"/>
<rect x="808" y="805" width="8" height="44" fill="#fff" stroke="#ccc" stroke-width=".5"/>
<rect x="808" y="602" width="8" height="8" fill="#fff" stroke="#ccc" stroke-width=".5"/><path d="M810.500 607.500l1.500-2.500 1.500 2.500z" fill="#333"/>
<rect x="808" y="884" width="8" height="8" fill="#fff" stroke="#ccc" stroke-width=".5"/><path d="M810.500 887l1.500 2.500 1.500-2.500z" fill="#333"/>
<path d="M812 893l-3 5h6zM809 899h6v2h-6zM809 903h6v2h-6zM812 911l-3-5h6z" fill="#777"/>
<rect x="130" y="920" width="687" height="21" fill="#e6e6e6"/><path d="M130 920h687" stroke="#d4d4d4"/>
<text x="135" y="932" font-size="8.500" fill="#555" textLength="62" lengthAdjust="spacingAndGlyphs">Click to add notes</text>

<!-- status 2 -->
<rect x="0" y="940" width="817" height="11" fill="#f3f3f3"/>
<text class="st" x="7" y="948" textLength="28" lengthAdjust="spacingAndGlyphs">Slide 2 of 2</text>
<rect x="46" y="942" width="7" height="7" fill="none" stroke="#888" stroke-width=".7"/>
<text class="st" x="62" y="948" textLength="89" lengthAdjust="spacingAndGlyphs">Chinese (Simplified, Mainland China)</text>
<circle cx="164" cy="945" r="3" fill="none" stroke="#666" stroke-width=".7"/>
<text x="170" y="948" font-size="7" font-weight="700" fill="#222" textLength="64" lengthAdjust="spacingAndGlyphs">Accessibility: Investigate</text>
<path d="M489 948h5l-1-4h-3z" fill="#888"/>
<text class="st" x="496" y="948" textLength="15" lengthAdjust="spacingAndGlyphs">Notes</text>
<rect x="520" y="941" width="8" height="7" fill="#555"/>
<text class="st" x="529" y="948" textLength="39" lengthAdjust="spacingAndGlyphs">Display Settings</text>
<path d="M579 941h8v6h-6l-2 2z" fill="#555"/>
<text class="st" x="588" y="948" textLength="26" lengthAdjust="spacingAndGlyphs">Comments</text>
<rect x="625" y="940" width="21" height="11" fill="#c8c8c8"/>
<path d="M631 942h7v7h-7zM652 942h3v3h-3zM657 942h3v3h-3zM652 947h3v2h-3zM657 947h3v2h-3zM673 942h3v7h-3zM678 942h3v7h-3zM694 942h7v4h-7zM697.500 946v3" fill="none" stroke="#888" stroke-width=".7"/>
<path d="M712 945.500h4M719 945.500h53M775 945.500h5M777.500 943v5" stroke="#888"/>
<rect x="745" y="942" width="2" height="7" fill="#444"/>
<text class="st" x="786" y="948" textLength="13" lengthAdjust="spacingAndGlyphs">104%</text>
<rect x="806" y="942" width="7" height="7" fill="none" stroke="#888" stroke-width=".7"/>

<!-- taskbar 2 -->
<linearGradient id="tb2"><stop offset="0" stop-color="#1c1b22"/><stop offset=".5" stop-color="#2a1a1c"/><stop offset="1" stop-color="#331a24"/></linearGradient>
<rect x="0" y="951" width="817" height="25" fill="url(#tb2)"/>
<use href="#win" x="11" y="957"/>
<rect x="31" y="954.500" width="117" height="18" rx="9" fill="#423e3e"/>
<circle cx="41" cy="962" r="3" fill="none" stroke="#ddd"/><path d="M43 964.500l2 2.500" stroke="#ddd"/>
<text x="50" y="967" font-size="8" fill="#ccc" textLength="22" lengthAdjust="spacingAndGlyphs">Search</text>
<path d="M123 957l5-1 3 5 6 0 3 5v3h-2l-1-3h-6l-1 3h-2l0-5-3-3z" fill="#bcb3c4"/><rect x="120" y="969" width="26" height="2.500" fill="#7a6040"/>
<use href="#folder" x="160" y="963"/><use href="#vs" x="184" y="963"/><use href="#chr" x="207" y="963"/>
<rect x="248" y="956" width="13" height="14" fill="#1e7a44"/><rect x="248" y="959" width="6" height="8" fill="#0f5c30"/>
<circle cx="276" cy="962" r="4.500" fill="#29c45a"/><circle cx="280" cy="966" r="3.500" fill="#eee"/>
<rect x="290" y="953" width="22" height="22" rx="2" fill="#3c2c30"/>
<circle cx="301" cy="963" r="6" fill="#e25b29"/><rect x="295" y="959" width="6" height="7" fill="#c94316"/>
<g fill="#999"><rect x="159" y="974" width="3" height="1.500"/><rect x="183" y="974" width="3" height="1.500"/><rect x="206" y="974" width="3" height="1.500"/><rect x="230" y="974" width="3" height="1.500"/><rect x="253" y="974" width="3" height="1.500"/><rect x="276" y="974" width="3" height="1.500"/></g>
<rect x="297" y="973.500" width="8" height="2" fill="#e8804a"/>
<path d="M631 965l3-3 3 3" fill="none" stroke="#ddd"/>
<path d="M647 967v-3l2-2h4l2 2v3z" fill="#eee"/>
<path d="M665 966a4 4 0 1 1 6 0" fill="none" stroke="#ddd"/><circle cx="671" cy="968" r="1.500" fill="#e9943a"/>
<circle cx="685" cy="962" r="3" fill="#29c45a"/><circle cx="688" cy="965" r="2.200" fill="#eee"/>
<text class="tk" x="699" y="961" textLength="13" lengthAdjust="spacingAndGlyphs">ENG</text>
<text class="tk" x="702" y="971" textLength="7" lengthAdjust="spacingAndGlyphs">US</text>
<path d="M721 961a7 7 0 0 1 9 0l-4.500 6z" fill="none" stroke="#ddd" stroke-width=".8"/>
<path d="M735 961h2l2-2v8l-2-2h-2z" fill="#ddd"/><rect x="747" y="960" width="8" height="6" fill="#ddd"/>
<text class="tk" x="771" y="960" textLength="22" lengthAdjust="spacingAndGlyphs">5:06 pm</text>
<text class="tk" x="764" y="971" textLength="29" lengthAdjust="spacingAndGlyphs">31/1/2025</text>
<path d="M798 959h8v7h-5l-2 2v-2h-1z" fill="#ddd"/>
</g>

<!-- green Screenshot badges -->
<rect x="608" y="1" width="209" height="67" fill="#228b22"/>
<text class="w" x="636" y="44" font-size="28" textLength="152" lengthAdjust="spacingAndGlyphs">Screenshot</text>
<rect x="608" y="517" width="209" height="68" fill="#228b22"/>
<text class="w" x="636" y="560.500" font-size="28" textLength="152" lengthAdjust="spacingAndGlyphs">Screenshot</text>
</svg>
</body></html>
